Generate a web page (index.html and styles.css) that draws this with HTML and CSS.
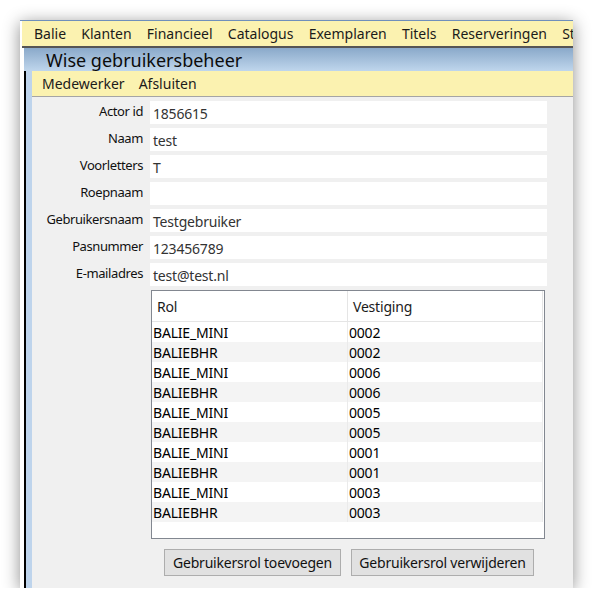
FILE: index.html
```html
<!DOCTYPE html>
<html lang="nl">
<head>
    <meta charset="UTF-8">
    <title>Wise gebruikersbeheer</title>
    <link rel="stylesheet" href="styles.css">
</head>
<body>
    <div class="window">
        <div class="menubar">
            <span class="menu-item">Balie</span>
            <span class="menu-item">Klanten</span>
            <span class="menu-item">Financieel</span>
            <span class="menu-item">Catalogus</span>
            <span class="menu-item">Exemplaren</span>
            <span class="menu-item">Titels</span>
            <span class="menu-item">Reserveringen</span>
            <span class="menu-item">St</span>
        </div>
        <div class="titlebar">Wise gebruikersbeheer</div>
        <div class="frame">
            <div class="strip"></div>
            <div class="panel">
                <div class="submenu">
                    <span class="submenu-item">Medewerker</span>
                    <span class="submenu-item">Afsluiten</span>
                </div>

                <div class="form">
                    <label class="field-label">Actor id</label>
                    <div class="field">1856615</div>
                    <label class="field-label">Naam</label>
                    <div class="field">test</div>
                    <label class="field-label">Voorletters</label>
                    <div class="field">T</div>
                    <label class="field-label">Roepnaam</label>
                    <div class="field"></div>
                    <label class="field-label">Gebruikersnaam</label>
                    <div class="field">Testgebruiker</div>
                    <label class="field-label">Pasnummer</label>
                    <div class="field">123456789</div>
                    <label class="field-label">E-mailadres</label>
                    <div class="field">test@test.nl</div>
                </div>

                <div class="grid-wrap">
                    <table class="roles">
                        <thead>
                            <tr><th class="col-rol">Rol</th><th class="col-vest">Vestiging</th></tr>
                        </thead>
                        <tbody>
                            <tr><td>BALIE_MINI</td><td>0002</td></tr>
                            <tr><td>BALIEBHR</td><td>0002</td></tr>
                            <tr><td>BALIE_MINI</td><td>0006</td></tr>
                            <tr><td>BALIEBHR</td><td>0006</td></tr>
                            <tr><td>BALIE_MINI</td><td>0005</td></tr>
                            <tr><td>BALIEBHR</td><td>0005</td></tr>
                            <tr><td>BALIE_MINI</td><td>0001</td></tr>
                            <tr><td>BALIEBHR</td><td>0001</td></tr>
                            <tr><td>BALIE_MINI</td><td>0003</td></tr>
                            <tr><td>BALIEBHR</td><td>0003</td></tr>
                        </tbody>
                    </table>
                </div>

                <div class="actions">
                    <button class="btn btn-add">Gebruikersrol toevoegen</button>
                    <button class="btn btn-remove">Gebruikersrol verwijderen</button>
                </div>
            </div>
        </div>
    </div>
</body>
</html>
```

FILE: styles.css
```css
:root {
    --menu-bg: #fbf2b0;
    --panel-bg: #f0f0f0;
    --strip-bg: #bed4ec;
    --title-top: #8aa9ca;
    --title-bottom: #bfd6ec;
    --grid-border: #828790;
    --row-alt: #f4f4f4;
    --btn-bg: #e1e1e1;
    --btn-border: #adadad;
}

body {
    margin: 0;
    background-color: #ffffff;
    font-family: "Noto Sans", "Open Sans", sans-serif;
    color: #111111;
}

.window {
    margin: 20px 0 0 20px;
    width: 553px;
    height: 568px;
    background-color: #ffffff;
    border-top: 1px solid #6f8fbb;
    box-sizing: border-box;
    display: flex;
    flex-direction: column;
    overflow: hidden;
    box-shadow: 0 3px 16px rgba(0, 0, 0, 0.45);
}

.menubar {
    height: 25px;
    margin-left: 2px;
    padding-left: 6px;
    background-color: var(--menu-bg);
    border-bottom: 2px solid #555555;
    display: flex;
    align-items: center;
    white-space: nowrap;
    font-size: 14px;
    color: #1b1b1b;
}

.menu-item {
    padding: 0 8px 0 6px;
    margin-right: 1.2px;
}

.titlebar {
    margin-left: 4px;
    height: 23px;
    padding-left: 22px;
    background: linear-gradient(to bottom, var(--title-top), var(--title-bottom));
    font-size: 18px;
    line-height: 24px;
    color: #0c0c0c;
}

.frame {
    flex: 1;
    margin-left: 4px;
    border-left: 2px solid #000000;
    display: flex;
}

.strip {
    width: 6px;
    background-color: var(--strip-bg);
}

.panel {
    flex: 1;
    background-color: var(--panel-bg);
    display: flex;
    flex-direction: column;
}

.submenu {
    height: 25px;
    padding-left: 10px;
    background-color: var(--menu-bg);
    border-bottom: 1px solid #a5a5a5;
    display: flex;
    align-items: center;
    gap: 14px;
    font-size: 14px;
    color: #1b1b1b;
}

.form {
    display: grid;
    grid-template-columns: 111px 397px;
    column-gap: 7px;
    row-gap: 4px;
    padding-top: 4px;
}

.field-label {
    text-align: right;
    font-size: 13px;
    letter-spacing: -0.4px;
    line-height: 21px;
    color: #111111;
}

.field {
    height: 23px;
    background-color: #ffffff;
    padding-left: 3px;
    font-size: 14px;
    line-height: 26px;
    letter-spacing: -0.2px;
    color: #333333;
}

.grid-wrap {
    margin: 4px 0 0 119px;
    width: 394px;
    height: 249px;
    border: 1px solid var(--grid-border);
    box-sizing: border-box;
    background-color: #ffffff;
}

.roles {
    border-collapse: collapse;
    width: 391px;
    font-size: 14px;
    letter-spacing: -0.2px;
}

.roles th {
    height: 30px;
    padding: 0 0 0 5px;
    text-align: left;
    font-weight: normal;
    color: #1b1b1b;
    border-bottom: 1px solid #e5e5e5;
    border-right: 1px solid #e5e5e5;
}

.col-rol {
    width: 190px;
}

.roles td {
    height: 18px;
    padding: 2px 0 0 1px;
    line-height: 18px;
    color: #000000;
    border-right: 1px solid #ebebeb;
}

.roles tbody tr:nth-child(even) {
    background-color: var(--row-alt);
}

.actions {
    display: flex;
    gap: 10px;
    margin: 10px 0 0 132px;
}

.btn {
    height: 27px;
    padding: 0 4px;
    background-color: var(--btn-bg);
    border: 1px solid var(--btn-border);
    font-family: "Noto Sans", "Open Sans", sans-serif;
    font-size: 14px;
    letter-spacing: -0.2px;
    white-space: nowrap;
    color: #111111;
}

.btn-add {
    width: 177px;
}

.btn-remove {
    width: 183px;
}
```
